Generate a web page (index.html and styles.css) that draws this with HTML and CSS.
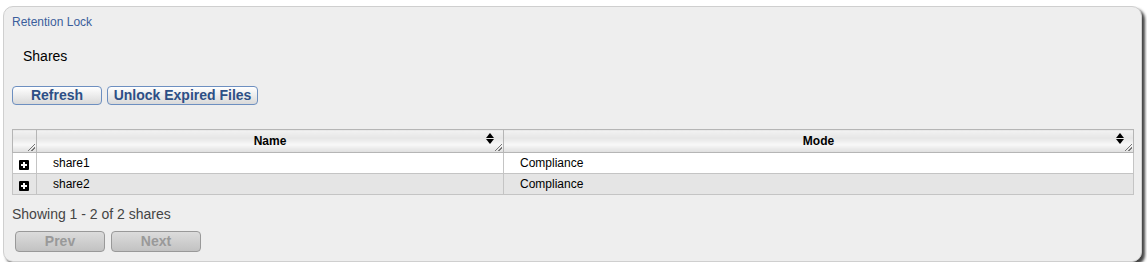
FILE: index.html
```html
<!DOCTYPE html>
<html lang="en">
  <head>
    <meta charset="UTF-8" />
    <title>Retention Lock</title>
    <link rel="stylesheet" href="styles.css">
  </head>
  <body>
    <div class="panel">
      <div class="panel-title">Retention Lock</div>
      <h3 class="section-title">Shares</h3>

      <div class="toolbar">
        <button class="btn">Refresh</button>
        <button class="btn btn-wide">Unlock Expired Files</button>
      </div>

      <table class="grid">
        <thead>
          <tr>
            <th class="col-expand"><span class="grip"></span></th>
            <th class="col-name">Name<span class="sort"></span><span class="grip"></span></th>
            <th class="col-mode">Mode<span class="sort"></span><span class="grip"></span></th>
          </tr>
        </thead>
        <tbody>
          <tr>
            <td class="col-expand"><span class="expand"></span></td>
            <td>share1</td>
            <td>Compliance</td>
          </tr>
          <tr class="alt">
            <td class="col-expand"><span class="expand"></span></td>
            <td>share2</td>
            <td>Compliance</td>
          </tr>
        </tbody>
      </table>

      <div class="summary">Showing 1 - 2 of 2 shares</div>

      <div class="pager">
        <button class="btn btn-disabled">Prev</button>
        <button class="btn btn-disabled">Next</button>
      </div>
    </div>
  </body>
</html>
```

FILE: styles.css
```css
body {
  margin: 0;
  font-family: "Liberation Sans", Arial, sans-serif;
  background-color: #ffffff;
}
.panel {
  box-sizing: border-box;
  width: 1139px;
  height: 256px;
  margin: 6px 0 0 3px;
  padding: 8px 8px 0 8px;
  background-color: #eeeeee;
  border: 1px solid #cfcfcf;
  border-radius: 10px;
  box-shadow: 3px 3px 3px #444;
}
.panel-title {
  font-size: 12px;
  line-height: 14px;
  color: #3b5e9c;
}
.section-title {
  margin: 19px 0 0 11px;
  font-size: 14px;
  font-weight: normal;
  line-height: 16px;
  color: #000;
}
.toolbar {
  display: flex;
  gap: 5px;
  margin-top: 22px;
}
.btn {
  box-sizing: border-box;
  height: 19px;
  width: 90px;
  padding: 0;
  font-family: "Liberation Sans", Arial, sans-serif;
  font-size: 14px;
  font-weight: bold;
  line-height: 17px;
  color: #2d4f86;
  background: linear-gradient(#ffffff, #d9d9d9);
  border: 1px solid #6d8fc0;
  border-radius: 4px;
}
.btn-wide {
  width: 151px;
}
.grid {
  width: 1122px;
  margin-top: 24px;
  border-collapse: collapse;
  font-size: 12px;
}
.grid th,
.grid td {
  border: 1px solid #c4c4c4;
  padding: 0;
  height: 20px;
}
.grid th {
  position: relative;
  height: 22px;
  font-weight: bold;
  text-align: center;
  color: #000;
  background: linear-gradient(#f2f2f2, #e6e6e6 35%, #f8f8f8 65%, #dedede);
  border-color: #b5b5b5;
}
.grid td {
  padding-left: 16px;
  background-color: #ffffff;
}
.grid tr.alt td {
  background-color: #e5e5e5;
}
.grid .col-expand {
  width: 23px;
  padding: 0;
  text-align: center;
}
.col-name {
  width: 466px;
}
.expand {
  position: relative;
  display: inline-block;
  width: 10px;
  height: 10px;
  margin: 4px 1px 0 0;
  background-color: #000;
  border-radius: 1px;
  vertical-align: top;
}
.expand::before,
.expand::after {
  content: "";
  position: absolute;
  background-color: #fff;
}
.expand::before {
  left: 2px;
  top: 4px;
  width: 6px;
  height: 2px;
}
.expand::after {
  left: 4px;
  top: 2px;
  width: 2px;
  height: 6px;
}
.sort {
  position: absolute;
  right: 9px;
  top: 3px;
  width: 8px;
  height: 11px;
}
.sort::before,
.sort::after {
  content: "";
  position: absolute;
  left: 0;
  border-left: 4px solid transparent;
  border-right: 4px solid transparent;
}
.sort::before {
  top: 0;
  border-bottom: 5px solid #000;
}
.sort::after {
  bottom: 0;
  border-top: 5px solid #000;
}
.grip {
  position: absolute;
  right: 1px;
  bottom: 1px;
  width: 7px;
  height: 7px;
  background: linear-gradient(135deg, transparent 45%, #777 45%, #777 55%, transparent 55%, transparent 70%, #777 70%, #777 80%, transparent 80%);
}
.summary {
  margin-top: 11px;
  font-size: 14px;
  line-height: 16px;
  color: #444;
}
.pager {
  display: flex;
  gap: 6px;
  margin: 9px 0 0 3px;
}
.btn-disabled {
  height: 21px;
  color: #999;
  background: linear-gradient(#dcdcdc, #c2c2c2);
  border-color: #999;
}
```
